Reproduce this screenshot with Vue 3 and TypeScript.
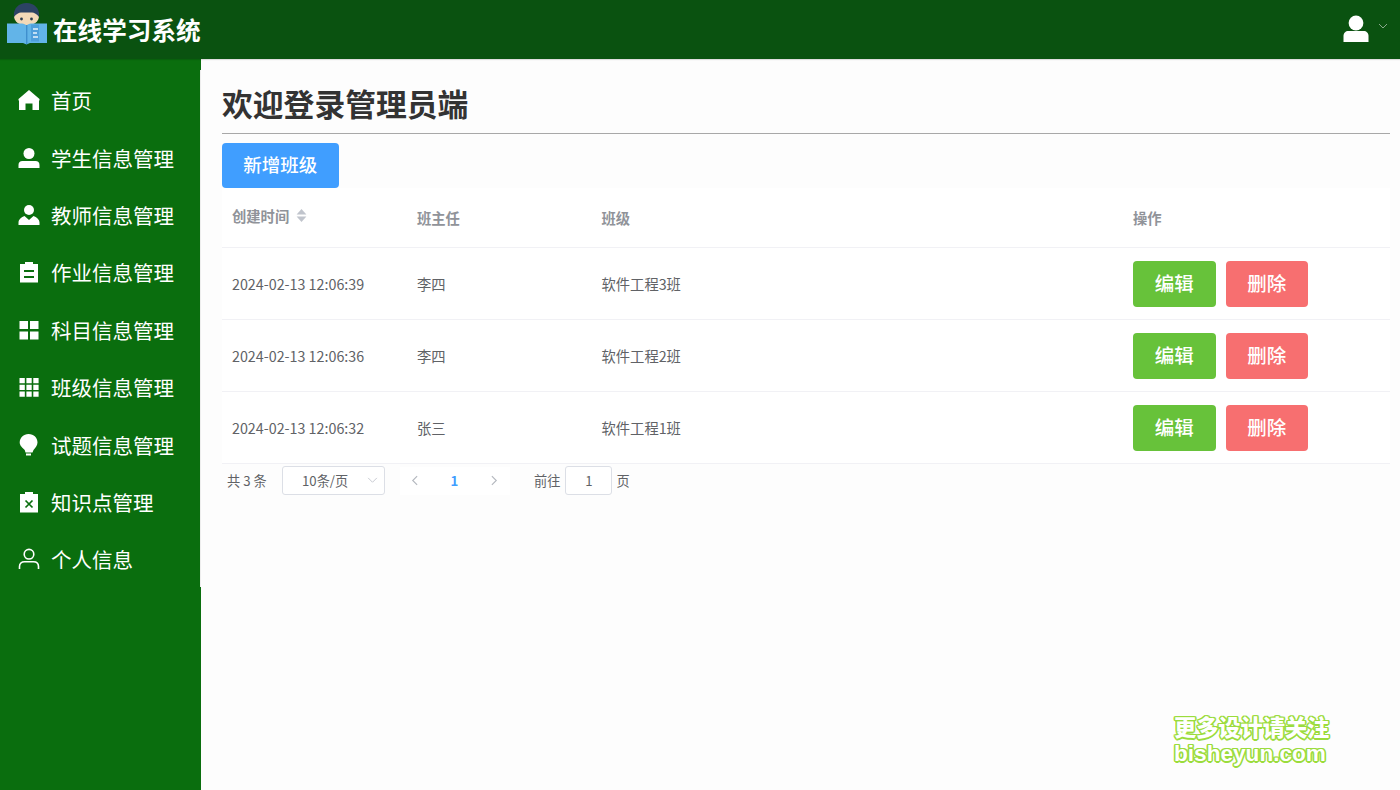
<script setup lang="ts">
interface Row { time: string; teacher: string; name: string }
const menu: { key: string; label: string }[] = [
  { key: 'home', label: '首页' },
  { key: 'user', label: '学生信息管理' },
  { key: 'custom', label: '教师信息管理' },
  { key: 'task', label: '作业信息管理' },
  { key: 'menu', label: '科目信息管理' },
  { key: 'grid', label: '班级信息管理' },
  { key: 'bulb', label: '试题信息管理' },
  { key: 'close', label: '知识点管理' },
  { key: 'person', label: '个人信息' },
]
const rows: Row[] = [
  { time: '2024-02-13 12:06:39', teacher: '李四', name: '软件工程3班' },
  { time: '2024-02-13 12:06:36', teacher: '李四', name: '软件工程2班' },
  { time: '2024-02-13 12:06:32', teacher: '张三', name: '软件工程1班' },
]
</script>

<template>
  <div class="app">
    <header class="top">
      <div class="brand">
        <svg class="logo" viewBox="0 0 42 42" width="42" height="42">
          <ellipse cx="20.500" cy="13" rx="12.500" ry="10" fill="#f3d9b8" />
          <path d="M8 14C7 5 13 0 20.500 0S34 5 33 14c-2-3-5-4.500-7-4.500H15c-2 0-5 1.500-7 4.500z" fill="#2c4364" />
          <circle cx="15.500" cy="16" r="1.400" fill="#2c3e50" />
          <circle cx="25.500" cy="16" r="1.400" fill="#2c3e50" />
          <path d="M1 20.500h15c2 0 3.500 1 4.500 2 1-1 2.500-2 4.500-2h16V40H24l-3.500 1.500L17 40H1z" fill="#62b4e8" />
          <rect x="20" y="22" width="1.400" height="19" fill="#3f8fce" />
          <rect x="25" y="21.500" width="8" height="17" fill="#4f9fdb" />
          <path d="M27 26h5M27 30h4M27 34h5" stroke="#e8f4fb" stroke-width="1.300" fill="none" />
        </svg>
        <span class="brand-text">在线学习系统</span>
      </div>
      <div class="account">
        <svg viewBox="0 0 26 28" width="26" height="28">
          <circle cx="13" cy="8" r="7.400" fill="#fff" />
          <path d="M0.500 27v-6c0-3 2-5 5-5h15c3 0 5 2 5 5v6z" fill="#fff" />
        </svg>
        <svg class="caret" viewBox="0 0 10 6" width="10" height="6">
          <path d="M1 1l4 4 4-4" stroke="#8aa88c" stroke-width="1" fill="none" />
        </svg>
      </div>
    </header>

    <div class="body">
      <aside class="side">
        <ul class="menu">
          <li v-for="m in menu" :key="m.label" class="item">
            <svg class="ico" viewBox="0 0 22 22" width="22" height="22">
              <path v-if="m.key === 'home'" d="M11 1L0.500 10v1.500H1V21h6.500v-6.500h7V21H21v-9.500h.5V10z" fill="#fff" />
              <template v-else-if="m.key === 'user'">
                <circle cx="11" cy="6.500" r="5.500" fill="#fff" />
                <path d="M0.500 21v-3c0-2.500 1.500-4 4-4h13c2.500 0 4 1.500 4 4v3z" fill="#fff" />
              </template>
              <template v-else-if="m.key === 'custom'">
                <circle cx="11" cy="6" r="5" fill="#fff" />
                <path d="M0.500 21v-2.500c0-3 3-5.500 6-6.500l4.500 4 4.500-4c3 1 6 3.500 6 6.500V21z" fill="#fff" />
              </template>
              <path v-else-if="m.key === 'task'" fill-rule="evenodd" d="M2 3h5V1h8v2h5v18.500H2zM6 9v2h10V9zm0 6v2h10v-2z" fill="#fff" />
              <path v-else-if="m.key === 'menu'" d="M1.500 2h8.500v8H1.500zM12 2h8.500v8H12zM1.500 12.500h8.500v8H1.500zM12 12.500h8.500v8H12z" fill="#fff" />
              <path v-else-if="m.key === 'grid'" d="M1.500 2h5.300v5.300H1.500zM8.400 2h5.300v5.300H8.400zM15.300 2h5.300v5.300h-5.300zM1.500 8.700h5.300V14H1.500zM8.400 8.700h5.300V14H8.400zM15.300 8.700h5.300V14h-5.300zM1.500 15.400h5.300v5.300H1.500zM8.400 15.400h5.300v5.300H8.400zM15.300 15.400h5.300v5.300h-5.300z" fill="#fff" />
              <template v-else-if="m.key === 'bulb'">
                <path d="M10.500 0C16 0 19.500 4 19.500 8.500c0 3.500-2.500 5.500-4 7.500l-1 2.500H7.500L6.700 16c-1.700-2-5-4-5-7.500C1.700 4 5.500 0 10.500 0z" fill="#fff" />
                <rect x="8" y="19.500" width="5" height="2" fill="#fff" />
              </template>
              <template v-else-if="m.key === 'close'">
                <path d="M2 3h5V1h8v2h5v18.500H2z" fill="#fff" />
                <path d="M7.500 9.500l7 7m0-7l-7 7" stroke="#0a6e0e" stroke-width="1.700" fill="none" />
              </template>
              <g v-else fill="none" stroke="#fff" stroke-width="1.600">
                <circle cx="11" cy="6.200" r="4.800" />
                <path d="M1.500 21v-2.500c0-3 2-4.800 5-4.800h9c3 0 5 1.800 5 4.800V21" />
              </g>
            </svg>
            <span>{{ m.label }}</span>
          </li>
        </ul>
      </aside>

      <main class="main">
        <h1 class="title">欢迎登录管理员端</h1>
        <button class="btn add">新增班级</button>
        <div class="table">
          <div class="row head">
            <div class="c c1 up">创建时间
              <svg class="sort" viewBox="0 0 10 12" width="11" height="13">
                <path d="M5 0l4.500 5H.5z" fill="#c0c4cc" />
                <path d="M5 12L.5 7h9z" fill="#c0c4cc" />
              </svg>
            </div>
            <div class="c c2">班主任</div>
            <div class="c c3">班级</div>
            <div class="c c4">操作</div>
          </div>
          <div v-for="r in rows" :key="r.time" class="row">
            <div class="c c1">{{ r.time }}</div>
            <div class="c c2">{{ r.teacher }}</div>
            <div class="c c3">{{ r.name }}</div>
            <div class="c c4 ops">
              <button class="btn edit">编辑</button>
              <button class="btn del">删除</button>
            </div>
          </div>
        </div>
        <div class="pager">
          <span class="total">共 3 条</span>
          <div class="select">
            <span>10条/页</span>
            <svg viewBox="0 0 12 8" width="11" height="7"><path d="M1 1l5 5 5-5" stroke="#c0c4cc" stroke-width="1" fill="none" /></svg>
          </div>
          <div class="nav">
            <svg viewBox="0 0 8 12" width="7" height="11"><path d="M7 1L2 6l5 5" stroke="#b4b8bf" stroke-width="1.300" fill="none" /></svg>
            <span class="cur">1</span>
            <svg viewBox="0 0 8 12" width="7" height="11"><path d="M1 1l5 5-5 5" stroke="#b4b8bf" stroke-width="1.300" fill="none" /></svg>
          </div>
          <span class="goto">前往</span>
          <div class="jump">1</div>
          <span class="goto-end">页</span>
        </div>
      </main>
    </div>

    <div class="mark">
      <div>更多设计请关注</div>
      <div class="mark-en">bisheyun.com</div>
    </div>
  </div>
</template>

<style>
html, body { margin: 0; background: #fdfdfd; overflow: hidden; }
</style>

<style scoped>
.app {
  position: relative;
  width: 1400px;
  height: 790px;
  display: flex;
  flex-direction: column;
  font-family: "Noto Sans CJK SC", "Noto Sans", sans-serif;
  background: #fdfdfd;
  overflow: hidden;
}
.top {
  height: 59px;
  flex: none;
  background: #0a5210;
  display: flex;
  align-items: center;
  justify-content: space-between;
  box-shadow: 0 1px 1px rgba(0, 0, 0, .12);
  position: relative;
  z-index: 2;
}
.brand { display: flex; align-items: flex-start; height: 59px; padding-left: 6px; }
.logo { display: block; margin-top: 3px; margin-right: 5px; }
.brand-text { color: #fff; font-size: 24.600px; font-weight: 700; line-height: 58px; }
.account { display: flex; align-items: center; gap: 9px; padding-right: 12px; margin-top: -2px; }
.caret { margin-top: -5px; }
.body { flex: 1; display: flex; min-height: 0; }
.side { width: 201px; flex: none; background: #0a6e0e; }
.menu {
  list-style: none;
  width: 201px;
  height: 517px;
  box-sizing: border-box;
  margin: 11px 0 0;
  padding: 1.600px 0 0;
  border-right: 1px solid #eeeeee;
}
.item {
  height: 57.400px;
  display: flex;
  align-items: center;
  padding-left: 18px;
  color: #fff;
  font-size: 20.500px;
}
.ico { flex: none; margin-right: 11px; }
.main { flex: 1; padding: 0 10px 0 21px; min-width: 0; }
.title {
  margin: 0;
  height: 75px;
  box-sizing: border-box;
  border-bottom: 1px solid #a8a8a8;
  font-size: 30.800px;
  font-weight: 700;
  line-height: 88px;
  color: #333;
}
.btn {
  border: 1px solid transparent;
  border-radius: 4px;
  color: #fff;
  font-family: inherit;
  font-weight: 500;
  font-size: 19.500px;
  padding: 0 0 2px;
  display: flex;
  align-items: center;
  justify-content: center;
}
.add { width: 116.500px; height: 45px; margin-top: 9px; background: #409eff; font-size: 18.500px; padding-bottom: 3px; }
.table { background: #fff; }
.row { display: flex; height: 72px; border-bottom: 1px solid #f1f1f5; box-sizing: border-box; align-items: center; color: #606266; font-size: 14.300px; }
.head { height: 60px; color: #909399; font-weight: 700; font-size: 14.300px; }
.c { box-sizing: border-box; padding-left: 10px; }
.c1 { width: 185px; }
.c2 { width: 184.500px; }
.c3 { width: 531.500px; }
.c4 { flex: 1; }
.up { position: relative; top: -2px; display: flex; align-items: center; gap: 7px; }
.sort { display: block; }
.ops { display: flex; gap: 10px; }
.edit, .del { width: 82.500px; height: 46px; }
.edit { background: #67c23a; }
.del { background: #f76f70; }
.pager { display: flex; align-items: center; height: 33px; padding-left: 5px; font-size: 13.200px; color: #606266; }
.total { width: 55px; }
.select {
  width: 103px;
  height: 29px;
  box-sizing: border-box;
  border: 1px solid #dcdfe6;
  border-radius: 3px;
  display: flex;
  align-items: center;
  justify-content: space-between;
  padding: 0 6px 0 19px;
  background: #fff;
}
.nav {
  margin-left: 15px;
  width: 110px;
  height: 28px;
  background: #fff;
  display: flex;
  align-items: center;
  justify-content: space-between;
  padding: 0 12px 0 11px;
  box-sizing: border-box;
}
.cur { color: #409eff; font-weight: 700; }
.goto { margin-left: 24px; }
.jump {
  width: 47px;
  height: 29px;
  margin-left: 5px;
  box-sizing: border-box;
  border: 1px solid #dcdfe6;
  border-radius: 3px;
  background: #fff;
  display: flex;
  align-items: center;
  justify-content: center;
}
.goto-end { margin-left: 4px; }
.mark {
  position: absolute;
  left: 1174px;
  top: 712px;
  color: #fff;
  font-weight: 900;
  font-size: 22.200px;
  line-height: 29px;
  white-space: nowrap;
  text-shadow: 1.500px 0 0 #9bdc3c, -1.500px 0 0 #9bdc3c, 0 1.500px 0 #9bdc3c, 0 -1.500px 0 #9bdc3c, 1.200px 1.200px 0 #9bdc3c, -1.200px 1.200px 0 #9bdc3c, 1.200px -1.200px 0 #9bdc3c, -1.200px -1.200px 0 #9bdc3c;
}
.mark-en { font-family: "Liberation Sans", Arial, sans-serif; font-weight: 700; font-size: 22.600px; line-height: 26px; }
</style>
